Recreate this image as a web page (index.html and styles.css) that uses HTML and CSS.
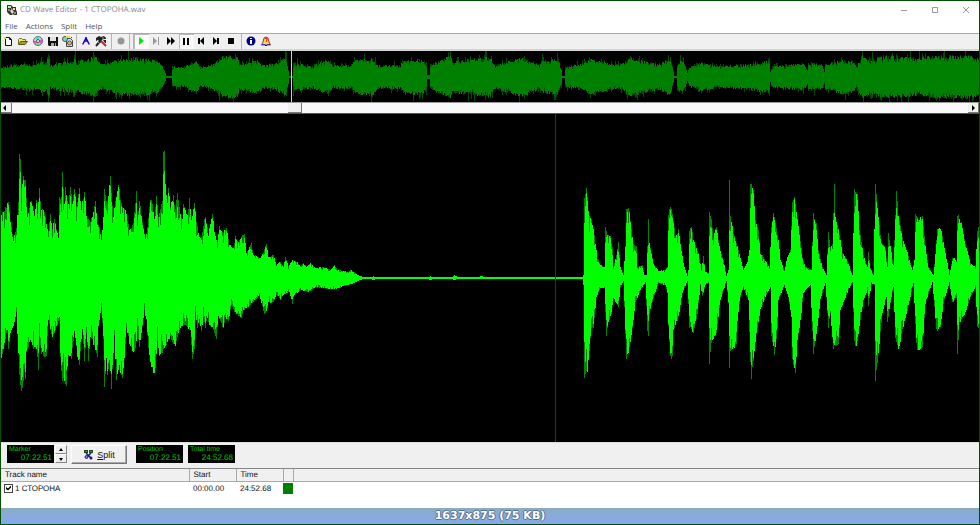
FILE: index.html
```html
<!DOCTYPE html>
<html lang="en">
<head>
<meta charset="utf-8">
<title>CD Wave Editor - 1 СТОРОНА.wav</title>
<link rel="stylesheet" href="styles.css">
</head>
<body>
<div class="window">
  <header class="titlebar">
    <svg class="app-icon" viewBox="0 0 11 12"><path d="M1 1h4l2 2h3v3l1 2v3H4L1 8z" fill="#333"/><path d="M2 2h3v2H2zM7 4h2v2H7z" fill="#dde4a0"/><path d="M2 5h2v2H2zM8 8h2v2H8z" fill="#7b9b57"/><path d="M4 7l2-2 2 3-2 2z" fill="#d7d7e8"/><path d="M5 4h1v2H5zM6 10h2v1H6z" fill="#a6a63c"/></svg>
    <span class="title">CD Wave Editor - 1 СТОРОНА.wav</span>
    <div class="caption-buttons">
      <button aria-label="Minimize"><svg viewBox="0 0 8 8"><path d="M1 4.500h6"/></svg></button>
      <button aria-label="Maximize"><svg viewBox="0 0 8 8"><path d="M1.500 1.500h5v5h-5z"/></svg></button>
      <button aria-label="Close"><svg viewBox="0 0 8 8"><path d="M1 1l6 6M7 1L1 7"/></svg></button>
    </div>
  </header>
  <nav class="menubar">
    <button>File</button><button>Actions</button><button>Split</button><button>Help</button>
  </nav>
  <div class="toolbar">
    <button aria-label="New"><svg viewBox="0 0 15 15"><path d="M4.500 3.500h4l2 2v6h-6z" fill="#fff" stroke="#111"/><path d="M8.500 3.500v2h2" fill="none" stroke="#111"/><path d="M3 3h2v2H3z" fill="#e6e000"/></svg></button>
    <button aria-label="Open"><svg viewBox="0 0 15 15"><path d="M2.500 10V5.500l1-1h2l1 1h3V7" fill="#eeee70" stroke="#77771a"/><path d="M2.500 10.500l2-3h7l-2.500 3z" fill="#a6a62e" stroke="#55551a"/></svg></button>
    <button aria-label="Read CD"><svg viewBox="0 0 15 15"><circle cx="7" cy="7" r="4.500" fill="#d4d4d4" stroke="#666"/><path d="M7 7L4 4a4 4 0 0 1 5-1z" fill="#41dede"/><path d="M7 7l4-2a4 4 0 0 1-1 5z" fill="#c95ae0"/><path d="M7 7l-3 4a4 4 0 0 1-1-4z" fill="#e356b8"/><path d="M7 7l2 4H5z" fill="#76d66a"/><circle cx="7" cy="7" r="1.500" fill="#fff" stroke="#555"/></svg></button>
    <button aria-label="Save"><svg viewBox="0 0 15 15"><path d="M2 3h10v9H3l-1-1z" fill="#111"/><path d="M4 3h6v4H4z" fill="#e4e4e4"/><path d="M5 9h5v3H5z" fill="#aaa"/><path d="M8 9h1v3H8z" fill="#111"/></svg></button>
    <button aria-label="Save tracks"><svg viewBox="0 0 15 15"><path d="M5.500 4.500h4l2 2v6h-6z" fill="#ddd" stroke="#444"/><circle cx="4" cy="5" r="2.500" fill="#75d9d0" stroke="#555"/><path d="M5 2h4v2H5z" fill="#e7df4e"/><circle cx="8.500" cy="9" r="2" fill="#c7c76b" stroke="#555"/><path d="M10 3l1 1" stroke="#444"/></svg></button>
    <span class="separator"></span>
    <button aria-label="Find silence"><svg viewBox="0 0 15 15"><path d="M7 3v5" stroke="#e0103c" stroke-width="2"/><path d="M7 4L4 10" fill="none" stroke="#0000e6" stroke-width="1.500"/><path d="M7 4l3 6" fill="none" stroke="#0000e6" stroke-width="1.500"/><path d="M4 9v2M10 9v2" stroke="#d0205c"/></svg></button>
    <button aria-label="Options"><svg viewBox="0 0 15 15"><path d="M2 4l3-2 2 1 3-1 2 2v1L9 5 7 7 4 6 2 7z" fill="#222"/><path d="M7 6l-5 6" stroke="#222" stroke-width="2"/><path d="M5 6l2 2" stroke="#222" stroke-width="2"/><path d="M7 7l5 5" stroke="#c92222" stroke-width="2"/><path d="M4 8l2 2M9 3v3" stroke="#999"/><path d="M9 6h3v3h-1z" fill="#222"/></svg></button>
    <span class="separator wide"></span>
    <button aria-label="Record" disabled><svg viewBox="0 0 15 15"><circle cx="7" cy="7" r="3.500" fill="#969696"/></svg></button>
    <span class="separator double"></span>
    <button class="pressed" aria-label="Play"><svg viewBox="0 0 15 15"><path d="M5 3l5 4-5 4z" fill="#00e800"/></svg></button>
    <button aria-label="Play to marker" disabled><svg viewBox="0 0 15 15"><path d="M4 3l4 4-4 4zM9 3h1v8H9z" fill="#999"/></svg></button>
    <button aria-label="Fast forward"><svg viewBox="0 0 15 15"><path d="M3 3l4 4-4 4zM7 3l4 4-4 4z" fill="#000"/></svg></button>
    <button class="pressed" aria-label="Pause"><svg viewBox="0 0 15 15"><path d="M4 4h2v7H4zM8 4h2v7H8z" fill="#000"/></svg></button>
    <button aria-label="Previous"><svg viewBox="0 0 15 15"><path d="M4 4h2v6H4zM10 3v8L6 7z" fill="#000"/></svg></button>
    <button aria-label="Next"><svg viewBox="0 0 15 15"><path d="M4 3l4 4-4 4zM8 4h2v6H8z" fill="#000"/></svg></button>
    <button aria-label="Stop"><svg viewBox="0 0 15 15"><path d="M4 4h6v6H4z" fill="#000"/></svg></button>
    <span class="separator wide"></span>
    <button aria-label="Information"><svg viewBox="0 0 15 15"><circle cx="7" cy="7" r="4.500" fill="#000080"/><path d="M6 4h2v1H6zM6 6h2v4H6z" fill="#fff"/></svg></button>
    <button aria-label="Help"><svg viewBox="0 0 15 15"><path d="M4 8l1-4 2-1 2 1 1 4 1.500 3h-9z" fill="#ffd35b" stroke="#a33a1d"/><path d="M6 5l1-1 1 1v1L7 8" fill="none" stroke="#d21b1b"/><path d="M3 10h3v1H3zM8 10h3v1H8z" fill="#2436d8"/><path d="M6 11h2v1H6z" fill="#111"/></svg></button>
  </div>
  <svg class="overview" id="overview" viewBox="1 51 978 51" preserveAspectRatio="none">
    <path class="peaks"/><path class="body"/><rect class="cursor" x="291" y="51" width="1" height="51"/>
  </svg>
  <div class="scrollbar">
    <button class="arrow" aria-label="Scroll left"><svg viewBox="0 0 9 8"><path d="M5 1v6L2 4z"/></svg></button>
    <div class="track"><span class="thumb"></span></div>
    <button class="arrow" aria-label="Scroll right"><svg viewBox="0 0 9 8"><path d="M4 1v6l3-3z"/></svg></button>
  </div>
  <svg class="wave" id="wave" viewBox="1 114 978 328" preserveAspectRatio="none">
    <path class="peaks"/><path class="body"/><rect class="playhead" x="555" y="114" width="1" height="328"/>
  </svg>
  <section class="controls">
    <div class="readout"><span>Marker</span><output>07:22.51</output></div>
    <div class="spinner">
      <button aria-label="Marker up"><svg viewBox="0 0 6 4"><path d="M3 0l2 3H1z"/></svg></button>
      <button aria-label="Marker down"><svg viewBox="0 0 6 4"><path d="M1 1h4L3 4z"/></svg></button>
    </div>
    <button class="split"><svg viewBox="0 0 11 11"><path d="M1 1h4v3H1zM6 1h4v3H6z" fill="#124d18"/><path d="M2 2h2v1H2zM7 2h2v1H7z" fill="#19a536"/><path d="M3 4l5 5M8 4L4 8" stroke="#181870" stroke-width="1.500"/><circle cx="3.500" cy="8" r="1.500" fill="#8888d8" stroke="#181890"/><circle cx="8" cy="9" r="1.500" fill="#181890"/></svg><span><u>S</u>plit</span></button>
    <div class="readout position"><span>Position</span><output>07:22.51</output></div>
    <div class="readout"><span>Total time</span><output>24:52.68</output></div>
  </section>
  <main class="tracks">
    <table>
      <thead><tr><th class="name">Track name</th><th class="time">Start</th><th class="time">Time</th><th class="swatch-col"></th><th></th></tr></thead>
      <tbody><tr>
        <td><label><input type="checkbox" checked>1 СТОРОНА</label></td>
        <td>00:00.00</td><td>24:52.68</td><td class="swatch-cell"><span class="swatch"></span></td><td></td>
      </tr></tbody>
    </table>
  </main>
  <footer class="caption">1637x875 (75 KB)</footer>
</div>
<script src="wave.js"></script>
</body>
</html>
```
FILE: styles.css
```css
* { box-sizing: border-box; }
body { margin: 0; }
button { margin: 0; padding: 0; border: 0; background: none; font: inherit; color: inherit; }
svg { display: block; }

.window {
  display: flex;
  flex-direction: column;
  min-height: 100vh;
  border: 1px solid #005000;
  background: #fff;
  font-family: "Liberation Sans", Arial, sans-serif;
  font-size: 8px;
  color: #111;
  text-rendering: geometricPrecision;
}

.titlebar {
  display: flex;
  align-items: center;
  height: 17px;
  padding-left: 5px;
  font-family: "Open Sans", "Noto Sans", sans-serif;
  color: #888;
}
.app-icon { width: 11px; height: 12px; margin-right: 3px; }
.caption-buttons { display: flex; gap: 5px; margin-left: auto; }
.caption-buttons button { display: grid; place-items: center; width: 26px; height: 16px; }
.caption-buttons svg { width: 8px; height: 8px; fill: none; stroke: #999; }

.menubar {
  display: flex;
  gap: 8px;
  height: 15px;
  padding-left: 4px;
  font-family: "Open Sans", "Noto Sans", sans-serif;
  line-height: 16px;
  color: #555;
}

.toolbar {
  display: flex;
  height: 18px;
  border-top: 1px solid #aaa;
  border-bottom: 2px solid #d4d4d4;
  background: #f0f0f0;
}
.toolbar button { width: 15px; height: 15px; }
.toolbar svg { width: 15px; height: 15px; }
.toolbar .pressed { background: #fafafa; box-shadow: inset 1px 1px #bbb; }
.separator { width: 3px; border-left: 1px solid #b4b4b4; }
.separator.wide { width: 5px; border-left: 0; background: linear-gradient(#b4b4b4, #b4b4b4) 2px 0 / 1px 100% no-repeat; }
.separator.double { width: 5px; border-left: 1px solid #b4b4b4; border-right: 1px solid #b4b4b4; }

.overview, .wave { width: 100%; background: #000; shape-rendering: crispEdges; }
.overview { height: 51px; }
.overview .peaks { fill: #004c00; }
.overview .body { fill: #008000; }
.cursor { fill: #ccc; }
.wave { flex: 1 1 328px; height: 328px; min-height: 200px; }
.wave .peaks { fill: #008600; }
.wave .body { fill: #0f0; }
.playhead { fill: #a00000; }

.scrollbar {
  display: flex;
  height: 12px;
  border-top: 1px solid #999;
  border-bottom: 1px solid #555;
  background: #f9f9f9;
}
.arrow { width: 11px; height: 10px; border-right: 1px solid #777; border-bottom: 1px solid #777; background: #f0f0f0; }
.arrow svg { width: 9px; height: 8px; }
.track { display: grid; flex: 1; grid-template-columns: 276fr 680fr; }
.thumb { grid-column: 2; width: 14px; height: 10px; border-right: 1px solid #777; border-bottom: 1px solid #777; background: #f0f0f0; }

.controls {
  display: flex;
  height: 26px;
  padding: 2px 6px;
  border-top: 1px solid #ddd;
  background: #f0f0f0;
}
.readout {
  display: flex;
  flex-direction: column;
  width: 47px;
  height: 18px;
  margin-right: 5px;
  padding: 1px 2px 0;
  background: #000;
  line-height: 8px;
  color: #00c800;
}
.readout span { font-size: 7px; }
.readout output { align-self: flex-end; }
.readout:first-child { margin-right: 1px; }
.position { margin-left: 9px; }
.spinner { display: grid; width: 12px; height: 18px; margin-right: 4px; }
.spinner button { display: grid; place-items: center; height: 9px; border: 1px solid; border-color: #fff #888 #888 #fff; }
.spinner svg { width: 6px; height: 4px; }
.split {
  display: flex;
  align-items: center;
  justify-content: center;
  gap: 3px;
  width: 56px;
  height: 19px;
  border: 1px solid;
  border-color: #fff #777 #777 #fff;
  box-shadow: inset -1px -1px #aaa;
  font-size: 9px;
}
.split svg { width: 11px; height: 11px; }

.tracks { flex: 0 0 40px; border-top: 1px solid #888; }
table { width: 100%; border-collapse: collapse; table-layout: fixed; }
th, td { padding: 0 0 0 4px; font-weight: normal; text-align: left; white-space: nowrap; }
th { height: 12px; border-right: 1px solid #aaa; border-bottom: 1px solid #aaa; background: #f0f0f0; line-height: 11px; }
th:last-child { border-right: 0; }
td { height: 13px; line-height: 13px; }
td:first-child { padding-left: 3px; }
.name { width: 188px; }
.time { width: 47px; }
.swatch-col { width: 10px; }
label { display: flex; align-items: center; gap: 2px; }
input {
  appearance: none;
  display: grid;
  place-items: center;
  width: 9px;
  height: 9px;
  margin: 0;
  border: 1px solid #444;
  background: #fff;
}
input:checked::before {
  content: "";
  width: 5px;
  height: 5px;
  background: #000;
  clip-path: polygon(0 30%, 40% 60%, 100% 0, 100% 40%, 40% 100%, 0 70%);
}
.swatch-cell { padding: 0; }
.swatch { display: block; width: 10px; height: 11px; background: #008000; }

.caption {
  height: 16px;
  background: linear-gradient(#8aacc4, #86a8f0);
  font: bold 11px/16px "DejaVu Sans", sans-serif;
  text-align: center;
  color: #fff;
  text-shadow: 1px 0 #56708a, -1px 0 #56708a, 0 1px #56708a, 0 -1px #56708a;
}
```
FILE: wave.js
```js
// Envelope points are "x,y" pairs in view box units.
const waveTop = "1,213 6,207 8,202 10,222 13,240 16,228 18,203 19,157 20,157 21,190 23,178 25,183 27,215 31,200 34,215 36,200 37,214 39,188 41,210 44,213 48,232 50,215 52,228 54,220 58,237 59,198 61,198 62,172 64,203 65,187 68,205 70,186 72,205 74,187 76,207 79,188 81,210 84,190 86,215 90,223 92,215 95,203 97,223 99,228 101,240 103,217 104,189 107,203 110,178 113,217 116,195 118,183 121,205 125,208 129,230 133,223 136,192 137,218 139,200 142,223 145,240 147,227 150,200 152,203 154,220 156,195 158,215 162,203 163,151 164,151 165,187 167,203 168,187 170,207 173,195 175,210 177,193 180,215 182,220 183,205 187,217 189,199 191,220 194,203 196,223 199,237 201,238 205,215 208,235 212,212 214,233 217,242 219,227 223,233 226,227 229,245 233,248 235,237 238,242 244,233 246,253 251,243 253,255 260,258 263,252 266,244 268,257 273,255 276,265 280,262 283,267 285,257 288,266 292,260 297,262 300,266 303,263 306,267 310,263 315,268 323,267 330,270 334,265 337,270 347,272 351,270 357,275 363,277 371,277 373,276 375,277 428,277 430,276 432,277 452,277 454,275 457,277 478,277 481,276 484,277 582,277 583,275 584,197 586,189 587,197 588,213 591,220 593,228 595,243 597,258 600,265 604,267 605,227 607,235 610,237 612,248 613,267 616,255 618,243 620,267 623,275 625,247 626,207 629,210 631,230 633,245 636,247 637,267 642,265 644,275 646,275 648,219 649,243 653,263 658,271 665,270 667,267 668,215 670,206 673,220 675,237 678,230 681,250 683,263 687,276 688,270 689,230 691,226 693,240 698,253 701,270 703,256 705,272 708,273 709,212 711,220 713,237 716,227 719,247 723,260 726,276 728,270 729,181 730,217 733,233 737,247 740,258 743,270 747,262 749,250 750,181 753,192 755,220 758,230 760,253 765,260 769,268 771,227 773,213 775,223 778,240 780,260 784,270 787,257 790,250 792,203 794,199 797,217 799,233 802,257 805,267 811,270 813,213 816,225 818,250 822,267 826,275 828,233 830,247 832,243 834,186 835,218 838,228 842,253 848,263 852,275 854,190 857,195 859,230 863,255 867,267 868,252 870,268 873,275 875,183 877,207 878,216 881,243 885,248 887,267 888,232 891,253 893,265 896,189 898,215 902,237 907,253 912,270 914,260 915,214 918,220 922,216 925,247 928,267 933,275 935,253 937,228 941,230 944,247 949,275 952,258 956,260 957,215 961,223 965,243 970,263 975,267 977,230 979,226";
const waveBottom = "1,358 4,343 7,330 8,350 10,332 13,327 16,313 17,333 19,377 20,388 22,391 24,370 25,380 26,352 30,340 33,350 36,347 38,370 39,337 41,353 46,356 48,320 52,338 55,330 59,317 60,358 62,380 66,383 68,353 71,358 74,330 77,357 79,363 82,328 84,362 86,333 88,360 90,335 97,355 98,327 101,307 103,340 104,386 106,357 107,375 109,358 111,389 112,370 114,335 116,380 119,367 122,377 124,357 126,328 130,347 134,353 137,333 139,347 144,310 146,320 148,350 150,363 153,372 155,370 157,340 159,357 163,350 170,337 175,347 178,333 183,323 190,330 192,360 194,350 195,312 197,328 199,320 201,331 203,318 205,327 207,317 210,327 212,327 216,338 218,317 223,329 225,317 228,322 231,305 235,313 241,318 243,310 248,307 255,300 259,295 264,315 267,308 268,303 273,302 276,295 280,299 283,295 289,292 292,304 293,296 300,290 307,292 312,290 315,287 323,288 331,289 340,288 343,286 352,284 357,281 363,279 371,279 373,280 375,279 428,279 430,280 432,279 452,279 454,280 457,279 582,279 583,285 584,380 587,370 588,362 591,327 593,328 596,297 600,288 604,288 606,335 608,323 611,313 613,298 618,307 620,287 623,281 625,333 626,359 629,348 632,328 635,303 640,290 645,282 647,330 648,335 649,313 653,298 658,283 665,285 667,293 668,327 670,357 672,358 673,330 678,317 682,293 687,281 689,327 693,332 697,313 700,285 702,297 705,285 708,283 709,363 711,343 716,333 720,300 726,281 728,303 729,369 730,350 736,345 737,320 740,297 743,287 748,300 750,363 751,377 753,360 756,333 760,310 765,297 770,287 771,337 774,353 777,330 778,300 784,285 788,297 791,317 792,360 795,370 797,340 801,313 803,293 810,285 813,353 816,333 820,300 825,283 828,327 830,313 833,347 838,343 840,310 848,290 852,283 854,343 856,348 858,333 863,300 867,290 868,305 871,283 874,285 875,382 878,353 882,313 886,297 887,322 890,303 893,287 895,337 898,351 902,330 907,310 913,283 916,343 917,352 922,348 925,303 932,282 936,330 940,327 943,303 949,282 952,303 956,297 957,355 959,323 965,313 970,297 975,287 977,328 979,330";
const overTop = "2,67 20,65 33,65 42,62 46,64 48,54 49,54 50,66 63,63 73,62 74,57 77,64 80,61 87,60 95,57 100,65 113,62 127,59 150,60 158,61 163,68 166,76 171,76 172,67 182,68 196,62 200,68 213,65 223,57 237,57 239,65 257,61 263,66 277,64 283,58 286,60 289,76 292,76 293,63 305,65 313,67 316,64 328,61 332,66 350,66 355,61 372,59 378,66 400,66 403,61 420,60 426,63 427,75 429,75 430,65 446,59 450,54 452,62 490,58 494,66 523,58 536,64 539,67 541,62 558,60 561,70 562,76 564,76 565,67 580,65 590,60 613,65 620,66 630,58 643,62 658,65 663,63 670,59 673,72 674,76 676,76 677,64 682,61 685,66 687,73 689,68 700,63 717,67 747,65 767,62 769,58 770,72 772,67 793,65 803,64 807,70 808,64 822,65 824,72 825,65 840,61 853,62 856,68 862,56 870,60 888,57 917,59 933,57 973,57 979,60";

const parse = text => text.split(" ").map(pair => pair.split(",").map(Number));

function sample(text) {
  const points = parse(text);
  const values = [];
  let i = 0;
  for (let x = 1; x < 979; x++) {
    while (i < points.length - 2 && points[i + 1][0] < x) i++;
    const [x0, y0] = points[i];
    const [x1, y1] = points[i + 1];
    const t = Math.min(1, Math.max(0, (x - x0) / (x1 - x0)));
    values.push(y0 + (y1 - y0) * t);
  }
  return values;
}

let seed = 71;
function random() {
  seed = (seed * 16807) % 2147483647;
  return seed / 2147483647;
}

// Splits one side of the envelope into thin peaks and the solid body below them.
function side(heights, jitter, trim, spike) {
  return heights.map((height, i) => {
    if (height <= 4) return [height, height];
    const near = heights.slice(Math.max(0, i - 2), i + 3);
    const mean = near.reduce((a, b) => a + b, 0) / near.length;
    const level = height * (1 + (random() - 0.5) * jitter);
    const cut = random() < 0.5 ? 1 : 1 - random() * trim;
    const peak = random() < 0.2 ? level * (1 + random() * spike) : level;
    return [peak, Math.min(level * cut, mean * 1.06)];
  });
}

function draw(id, center, tops, bottoms, jitter, trim, spike) {
  const up = side(tops.map(y => center - y), jitter, trim, spike);
  const down = side(bottoms.map(y => y - center), jitter, trim, spike);
  const svg = document.getElementById(id);
  ["peaks", "body"].forEach((name, layer) => {
    const d = up.map((u, i) => {
      const y0 = Math.round(center - u[layer]);
      const y1 = Math.round(center + down[i][layer]);
      return `M${i + 1} ${y0}h1V${y1}h-1z`;
    });
    svg.querySelector("." + name).setAttribute("d", d.join(""));
  });
}

draw("wave", 278, sample(waveTop), sample(waveBottom), 0.06, 0.26, 0);
const overview = sample(overTop);
draw("overview", 77, overview, overview.map(y => 154 - y), 0.22, 0.2, 0.4);
```
